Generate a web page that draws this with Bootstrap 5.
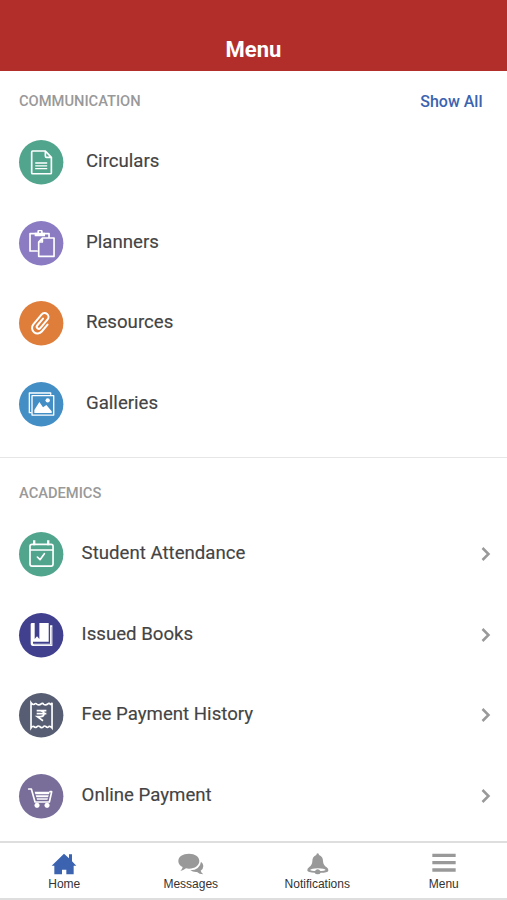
<!DOCTYPE html>
<html lang="en">
<head>
<meta charset="utf-8">
<meta name="viewport" content="width=device-width, initial-scale=1">
<title>Menu</title>
<link href="https://cdn.jsdelivr.net/npm/bootstrap@5.3.0/dist/css/bootstrap.min.css" rel="stylesheet">
<style>
  body { font-family: Roboto, "Liberation Sans", sans-serif; color: #444; height: 900px; overflow: hidden; }
  .app-header { background: #b12e2a; height: 71.4px; padding-bottom: 8.4px; }
  .app-title { font-size: 22px; font-weight: 700; line-height: 26px; color: #fff; }
  .section-head { padding: 0 24.5px 0 19px; }
  .section-one { height: 386.6px; border-bottom: 1.5px solid #e6e6e6; }
  .section-one .section-head { height: 50.3px; padding-top: 9px; }
  .section-two .section-head { height: 55.7px; padding-top: 14px; }
  .section-label { font-size: 14.7px; font-weight: 500; color: #999; line-height: 20px; }
  .show-all { font-size: 16px; font-weight: 500; color: #3b63b0; line-height: 20px; padding-top: 1px; }
  .menu-row { height: 80.7px; padding: 0 13px 0 19px; color: #444; }
  .menu-icon { width: 44.4px; height: 44.4px; flex: none; overflow: visible; }
  .menu-text { font-size: 18.65px; line-height: 24px; padding-bottom: 2.2px; -webkit-text-stroke: .15px #444; }
  .section-one .menu-text { margin-left: 22.6px; }
  .section-two .menu-text { margin-left: 18.2px; }
  .menu-icon .ln { fill: none; stroke: #fff; stroke-width: 5; stroke-linejoin: round; stroke-linecap: round; }
  .tab-bar { height: 58.5px; border-top: 2px solid #dedede; border-bottom: 2px solid #dedede; background: #fff; margin-bottom: .5px; padding-left: 1px; }
  .tab-link { font: 12px/14px "Liberation Sans", sans-serif; color: #333; padding-top: 9px; }
  .tab-link svg { width: 26px; height: 24px; margin-bottom: 1px; }
</style>
</head>
<body class="bg-white d-flex flex-column">
<header class="app-header d-flex align-items-end justify-content-center flex-shrink-0">
  <h1 class="app-title m-0">Menu</h1>
</header>
<main class="flex-grow-1 overflow-hidden">
  <section class="section-one">
    <div class="section-head d-flex justify-content-between align-items-center">
      <h2 class="section-label m-0">COMMUNICATION</h2>
      <a class="show-all text-decoration-none" href="#">Show All</a>
    </div>
    <nav>
      <a class="menu-row d-flex align-items-center text-decoration-none" href="#">
        <svg class="menu-icon" viewBox="0 0 133 133"><circle cx="66.500" cy="66.500" r="66.500" fill="#52a58d"/>
          <path class="ln" d="M41 33H79L97 52V98Q97 101 94 101H41Q38 101 38 98V36Q38 33 41 33ZM79 34V48Q79 52 83 52H96"/><path class="ln" style="stroke-width:4" d="M50 69H83M50 77.500H83M50 86H83"/></svg>
        <span class="menu-text">Circulars</span></a>
      <a class="menu-row d-flex align-items-center text-decoration-none" href="#">
        <svg class="menu-icon" viewBox="0 0 133 133"><circle cx="66.500" cy="66.500" r="66.500" fill="#8a7bc3"/>
          <path class="ln" d="M54 90H33V38H90V47M70 51H105V106H59V63ZM70 51V63H59"/><path d="M47 46V35H55V30Q55 27 59 27H67Q71 27 71 30V35H78V46ZM60 31V36H66V31Z" fill="#fff" fill-rule="evenodd"/></svg>
        <span class="menu-text">Planners</span></a>
      <a class="menu-row d-flex align-items-center text-decoration-none" href="#">
        <svg class="menu-icon" viewBox="0 0 133 133"><circle cx="66.500" cy="66.500" r="66.500" fill="#df7e3b"/>
          <path class="ln" style="stroke-width:6" transform="rotate(40 66 66)" d="M84 57V84A16.500 16.500 0 0 1 51 84V45A11.500 11.500 0 0 1 74 45V79A6 6 0 0 1 62 79V52"/></svg>
        <span class="menu-text">Resources</span></a>
      <a class="menu-row d-flex align-items-center text-decoration-none" href="#">
        <svg class="menu-icon" viewBox="0 0 133 133"><circle cx="66.500" cy="66.500" r="66.500" fill="#438ec5"/>
          <path class="ln" style="stroke-width:4" d="M35 92H31V33H95V37M39 41H104V99H39Z"/><path d="M46 93V84L61 60L72 76L82 69L98 88V93Z" fill="#fff"/><circle cx="86" cy="55" r="6.500" fill="#fff"/></svg>
        <span class="menu-text">Galleries</span></a>
    </nav>
  </section>
  <section class="section-two">
    <div class="section-head d-flex align-items-center">
      <h2 class="section-label m-0">ACADEMICS</h2>
    </div>
    <nav>
      <a class="menu-row d-flex align-items-center text-decoration-none" href="#">
        <svg class="menu-icon" viewBox="0 0 133 133"><circle cx="66.500" cy="66.500" r="66.500" fill="#52a58d"/>
          <rect class="ln" x="33" y="37" width="69" height="65" rx="6"/><path class="ln" d="M34 54H101M55 75L63 83L76 65"/><path d="M42 25H49V40H42ZM84 25H91V40H84Z" fill="#fff"/></svg>
        <span class="menu-text">Student Attendance</span>
        <svg class="ms-auto" width="18" height="18" viewBox="0 0 18 18"><path d="M6.500 3L12.500 9L6.500 15" fill="none" stroke="#999" stroke-width="2.500"/></svg></a>
      <a class="menu-row d-flex align-items-center text-decoration-none" href="#">
        <svg class="menu-icon" viewBox="0 0 133 133"><circle cx="66.500" cy="66.500" r="66.500" fill="#41408f"/>
          <path d="M35 34Q35 30 39 30H47V78L54 70L61 78V30H89V86H42V92H93V37H100V99H42Q35 99 35 91Z" fill="#fff"/><path d="M97 42V95H44" fill="none" stroke="#8b8abc" stroke-width="1.500"/></svg>
        <span class="menu-text">Issued Books</span>
        <svg class="ms-auto" width="18" height="18" viewBox="0 0 18 18"><path d="M6.500 3L12.500 9L6.500 15" fill="none" stroke="#999" stroke-width="2.500"/></svg></a>
      <a class="menu-row d-flex align-items-center text-decoration-none" href="#">
        <svg class="menu-icon" viewBox="0 0 133 133"><circle cx="66.500" cy="66.500" r="66.500" fill="#575d72"/>
          <path class="ln" style="stroke-linejoin:miter" d="M36 29Q41 36 46 34Q50 29 54 34Q60 38 66 33Q70 29 74 34Q80 38 86 33Q90 29 94 34Q97 35 99 29V105Q94 99 90 100Q86 106 80 100Q76 97 72 102Q67 106 62 100Q57 97 53 102Q48 105 44 100Q41 98 36 105Z"/><path d="M53 53H82M53 62H82M53 53H64Q75 54 75 62T64 71H55L72 83" fill="none" stroke="#fff" stroke-width="5"/></svg>
        <span class="menu-text">Fee Payment History</span>
        <svg class="ms-auto" width="18" height="18" viewBox="0 0 18 18"><path d="M6.500 3L12.500 9L6.500 15" fill="none" stroke="#999" stroke-width="2.500"/></svg></a>
      <a class="menu-row d-flex align-items-center text-decoration-none" href="#">
        <svg class="menu-icon" viewBox="0 0 133 133"><circle cx="66.500" cy="66.500" r="66.500" fill="#796e9a"/>
          <path class="ln" d="M29 45H37L48 84H91L98 53H93"/><path d="M47 53H92L90 61H49ZM50 64H89L87 70H52ZM53 73H87L85 77H54Z" fill="#fff"/><circle cx="54" cy="94" r="7.500" fill="#fff"/><circle cx="84" cy="94" r="7.500" fill="#fff"/></svg>
        <span class="menu-text">Online Payment</span>
        <svg class="ms-auto" width="18" height="18" viewBox="0 0 18 18"><path d="M6.500 3L12.500 9L6.500 15" fill="none" stroke="#999" stroke-width="2.500"/></svg></a>
    </nav>
  </section>
</main>
<nav class="tab-bar row g-0 flex-shrink-0">
  <a class="tab-link col d-flex flex-column align-items-center text-decoration-none" href="#">
    <svg viewBox="0 0 78 72"><path d="M2 41L39 5L54 19V7H63V28L76 41H68V67H46V53H33V67H10V41Z" fill="#3b63b0"/></svg>Home</a>
  <a class="tab-link col d-flex flex-column align-items-center text-decoration-none" href="#">
    <svg viewBox="0 0 78 72"><path d="M33 5C51 5 64 14 64 27S51 50 33 50Q28 50 24 49Q16 56 7 57Q13 52 14 45Q1 39 1 27C1 14 14 5 33 5Z" fill="#999"/><path d="M69 29Q76 34 76 42Q76 51 68 56Q70 62 76 67Q64 67 57 60Q45 61 37 55Q66 53 69 29Z" fill="#999"/></svg>Messages</a>
  <a class="tab-link col d-flex flex-column align-items-center text-decoration-none" href="#">
    <svg viewBox="0 0 78 72"><path d="M41 4Q45 4 45 9Q57 13 57 28Q58 40 68 46Q74 50 73 56Q71 62 50 62Q48 67 41 67T32 62Q12 61 10 56Q9 50 15 46Q25 39 25 28Q25 13 37 9Q37 4 41 4ZM18 54Q25 58 33 57Q36 52 41 52T49 57Q59 58 65 54Q62 50 41 49Q23 50 18 54Z" fill="#999" fill-rule="evenodd"/></svg>Notifications</a>
  <a class="tab-link col d-flex flex-column align-items-center text-decoration-none" href="#">
    <svg viewBox="0 0 78 72"><path d="M4 5H74V15H4ZM4 27H74V37H4ZM4 49H74V59H4Z" fill="#999"/></svg>Menu</a>
</nav>
<script src="https://cdn.jsdelivr.net/npm/bootstrap@5.3.0/dist/js/bootstrap.bundle.min.js"></script>
</body>
</html>
